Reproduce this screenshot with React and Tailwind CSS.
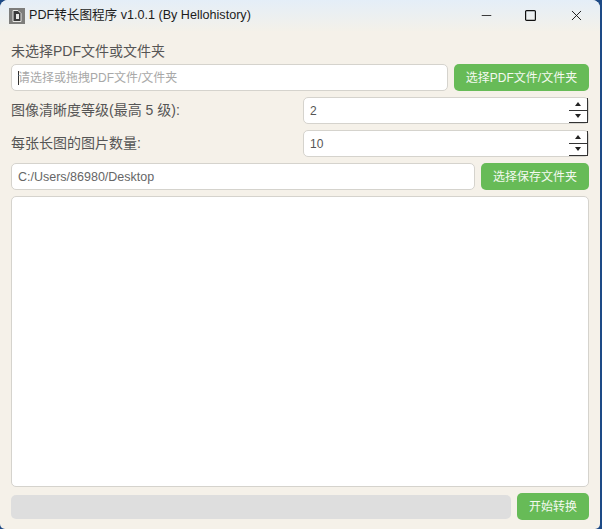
import { Minus, X } from "lucide-react";

const cjk = { fontFamily: '"Liberation Sans", "Noto Sans CJK SC", sans-serif' };

function GreenButton({ children, className }) {
  return (
    <button
      className={`flex items-center justify-center rounded-[5px] bg-[#67bb57] text-[12px] text-[#f4f9f0] ${className}`}
    >
      {children}
    </button>
  );
}

function SpinBox({ value }) {
  return (
    <div className="flex h-[27px] w-[286px] items-center justify-between rounded-[5px] border border-[#d5d3cd] bg-white pl-[6px] text-[12px] text-[#555555]">
      <span>{value}</span>
      <div className="flex h-full w-[19px] flex-col border-r border-[#333333]">
        <div className="flex h-[13px] items-center justify-center border-b border-[#333333]">
          <span className="h-0 w-0 border-x-[3px] border-b-[4px] border-x-transparent border-b-[#222222]" />
        </div>
        <div className="flex h-[13px] items-center justify-center border-b border-[#333333]">
          <span className="h-0 w-0 border-x-[3px] border-t-[4px] border-x-transparent border-t-[#222222]" />
        </div>
      </div>
    </div>
  );
}

function App() {
  return (
    <div className="h-[529px] w-[602px] overflow-hidden bg-[#1d4a86] pr-[2px]" style={cjk}>
      <div className="flex h-[529px] flex-col rounded-t-[8px] rounded-b-[5px] bg-[#f5f1e9]">
        {/* title bar */}
        <div className="flex h-[31px] shrink-0 items-center rounded-t-[8px] bg-gradient-to-b from-[#e4eef8] to-[#f4f1e9] pl-[9px]">
          <svg width="16" height="16" viewBox="0 0 16 16" className="shrink-0">
            <rect width="16" height="16" fill="#7d7d7b" />
            <path d="M4 2.5h5l3 3v8H4z" fill="#3a3a3a" stroke="#e8e8e6" strokeWidth="1" />
            <path d="M7 6h3v5H7z" fill="#e8e8e6" />
          </svg>
          <span className="ml-[4px] text-[12.6px] text-[#1c1c1c]">PDF转长图程序 v1.0.1 (By Hellohistory)</span>
          <div className="ml-auto flex items-center text-[#111111]">
            <Minus size={15} strokeWidth={1.3} className="mr-[31px]" />
            <svg width="11" height="11" viewBox="0 0 11 11" className="mr-[32px]">
              <rect x="0.6" y="0.6" width="9.8" height="9.8" rx="1" fill="none" stroke="currentColor" strokeWidth="1.2" />
            </svg>
            <X size={17} strokeWidth={1.3} className="mr-[15px]" />
          </div>
        </div>

        <div className="flex flex-1 flex-col px-[11px]">
          <div className="flex h-[33px] items-center pt-[7px] text-[14px] leading-none text-[#555555]">
            未选择PDF文件或文件夹
          </div>

          <div className="flex h-[27px] gap-[6px]">
            <div className="flex flex-1 items-center rounded-[5px] border border-[#d5d3cd] bg-white pl-[6px] text-[12px] text-[#a8a8a8]">
              <span className="mr-[-1px] h-[14px] w-px bg-[#333333]" />
              请选择或拖拽PDF文件/文件夹
            </div>
            <GreenButton className="w-[135px]">选择PDF文件/文件夹</GreenButton>
          </div>

          <div className="mt-[6px] flex items-center justify-between text-[14px] text-[#555555]">
            <span>图像清晰度等级(最高 5 级):</span>
            <SpinBox value="2" />
          </div>
          <div className="mt-[6px] flex items-center justify-between text-[14px] text-[#555555]">
            <span>每张长图的图片数量:</span>
            <SpinBox value="10" />
          </div>

          <div className="mt-[6px] flex h-[27px] gap-[6px]">
            <div className="flex flex-1 items-center rounded-[5px] border border-[#d5d3cd] bg-white pl-[6px] pt-px text-[12.5px] text-[#666666]">
              C:/Users/86980/Desktop
            </div>
            <GreenButton className="w-[108px]">选择保存文件夹</GreenButton>
          </div>

          <div className="mt-[6px] h-[291px] rounded-[5px] border border-[#d5d3cd] bg-white" />

          <div className="mt-[6px] flex h-[27px] items-center gap-[6px]">
            <div className="h-[24px] flex-1 rounded-[5px] bg-[#dedede]" />
            <GreenButton className="h-[27px] w-[72px]">开始转换</GreenButton>
          </div>
        </div>
      </div>
    </div>
  );
}

export default App;
